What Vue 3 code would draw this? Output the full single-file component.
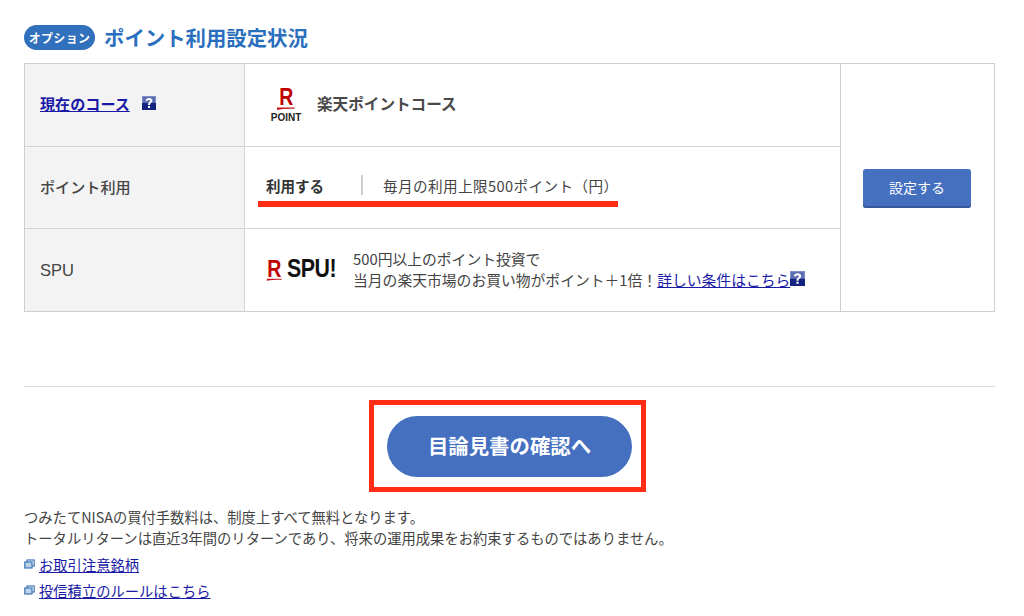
<script setup>
const notes = ['つみたてNISAの買付手数料は、制度上すべて無料となります。', 'トータルリターンは直近3年間のリターンであり、将来の運用成果をお約束するものではありません。']
const links = ['お取引注意銘柄', '投信積立のルールはこちら']
</script>

<template>
  <div class="page">
    <header class="head">
      <span class="badge">オプション</span>
      <h2 class="title">ポイント利用設定状況</h2>
    </header>

    <div class="table">
      <div class="rows">
        <div class="row">
          <div class="th">
            <a class="link strong bold" href="#">現在のコース</a>
            <svg class="q q-head" viewBox="0 0 14 14"><use href="#q" /></svg>
          </div>
          <div class="td course">
            <div class="logo-point">
              <span class="r">R</span>
              <svg class="swoosh" viewBox="0 0 20 3"><path d="M1 0.6 H19 L18 1.8 Q8 1.4 1 3 Z" fill="#c4161c" /></svg>
              <span class="pt">POINT</span>
            </div>
            <b class="course-name">楽天ポイントコース</b>
          </div>
        </div>
        <div class="row">
          <div class="th"><span class="strong">ポイント利用</span></div>
          <div class="td usage">
            <div class="usage-line">
              <b class="use">利用する</b>
              <span class="sep"></span>
              <span class="limit">毎月の利用上限500ポイント（円）</span>
            </div>
          </div>
        </div>
        <div class="row">
          <div class="th"><span class="latin">SPU</span></div>
          <div class="td spu">
            <div class="logo-spu">
              <span class="r-wrap">
                <span class="r small">R</span>
                <svg class="swoosh small" viewBox="0 0 20 3"><path d="M1 0.6 H19 L18 1.8 Q8 1.4 1 3 Z" fill="#c4161c" /></svg>
              </span>
              <span class="spu-word">SPU!</span>
            </div>
            <p class="spu-text">500円以上のポイント投資で<br />当月の楽天市場のお買い物がポイント＋1倍！<a class="link" href="#">詳しい条件はこちら</a><svg class="q q-inline" viewBox="0 0 14 14"><use href="#q" /></svg></p>
          </div>
        </div>
      </div>
      <div class="action">
        <button class="set-btn" type="button"><span class="set-label">設定する</span></button>
      </div>
    </div>

    <hr class="rule" />

    <div class="cta-frame">
      <button class="cta" type="button"><span class="cta-label">目論見書の確認へ</span></button>
    </div>

    <div class="notes">
      <p v-for="n in notes" :key="n">{{ n }}</p>
    </div>
    <ul class="links">
      <li v-for="l in links" :key="l">
        <svg class="win" viewBox="0 0 11 10">
          <rect x="3" y="1" width="7.2" height="6" fill="#fff" stroke="#3f76b5" stroke-width="1.2" />
          <rect x="0.8" y="3" width="7.2" height="6" fill="#bcd2e8" stroke="#3f76b5" stroke-width="1.2" />
        </svg>
        <a class="link" href="#">{{ l }}</a>
      </li>
    </ul>

    <svg class="defs" width="0" height="0">
      <symbol id="q" viewBox="0 0 14 14">
        <rect width="14" height="14" fill="#7f8fc4" />
        <rect y="7" width="14" height="7" fill="#13237f" />
        <rect x="1" y="1" width="12" height="6" fill="#5a6db3" />
        <path d="M3.6 4.8 C3.6 1.2 10.4 1.2 10.4 4.6 C10.4 6.8 8 6.8 8 9 H6 C6 6.2 8.2 6.2 8.2 4.8 C8.2 3.6 5.8 3.6 5.8 4.8 Z" fill="#fff" />
        <rect x="6" y="10" width="2" height="2" fill="#fff" />
      </symbol>
    </svg>
  </div>
</template>

<style>
body { margin: 0; background: #fff; }
</style>

<style scoped>
.page {
  width: 1024px;
  height: 616px;
  box-sizing: border-box;
  padding: 23px 29px 0 24px;
  overflow: hidden;
  font-family: "Noto Sans CJK JP", "Liberation Sans", sans-serif;
  font-size: 14px;
  color: #333;
  background: #fff;
}
.head { display: flex; align-items: center; gap: 9px; height: 28px; }
.badge {
  display: flex; align-items: center; justify-content: center;
  width: 71px; height: 25px; border-radius: 13px;
  background: #3170bd; color: #fff;
  font-size: 12px; font-weight: 700; letter-spacing: .3px;
}
.title { margin: 0; font-size: 20.4px; font-weight: 700; color: #2a6fbd; line-height: 28px; }
.table {
  display: flex; margin-top: 12px; width: 971px; height: 249px;
  box-sizing: border-box; border: 1px solid #cfcfcf;
}
.rows { width: 816px; flex: none; box-sizing: border-box; display: flex; flex-direction: column; border-right: 1px solid #cfcfcf; }
.row { flex: none; height: 82px; box-sizing: border-box; display: flex; border-bottom: 1px solid #d4d4d4; }
.row:first-child { height: 83px; }
.row:last-child { border-bottom: 0; }
.th {
  width: 220px; box-sizing: border-box; background: #f3f3f3;
  border-right: 1px solid #d4d4d4; padding: 0 0 4px 15px;
  display: flex; align-items: center;
}
.row:last-child .th { padding-bottom: 0; }
.td { flex: 1; display: flex; align-items: center; }
.strong { font-weight: 500; font-size: 15.1px; color: #444; }
.latin { font-family: "Liberation Sans", sans-serif; font-size: 16.5px; color: #444; }
.bold { font-weight: 700; }
a.link { color: #1a1aa6; text-decoration: underline; }
.q { display: block; }
.q-head { width: 14px; height: 14px; margin-left: 12px; margin-top: -1px; }
.q-inline { display: inline-block; width: 15px; height: 15px; vertical-align: 0; }
.course { padding-left: 24px; }
.logo-point { width: 34px; display: flex; flex-direction: column; align-items: center; margin-top: 1px; }
.r {
  font-family: "Liberation Sans", sans-serif; font-weight: 700;
  color: #bf0000; font-size: 23px; line-height: 19px; transform: scaleX(.85);
}
.swoosh { display: block; width: 20px; height: 3px; }
.pt { font-family: "Liberation Sans", sans-serif; font-weight: 700; font-size: 10px; line-height: 12px; color: #222; margin-top: 2px; }
.course-name { margin-left: 14px; margin-bottom: 5px; font-size: 15.6px; font-weight: 700; color: #4a4a4a; white-space: nowrap; }
.usage { padding-left: 13px; }
.usage-line {
  position: relative; display: flex; align-items: center;
  width: 360px; height: 38px; padding: 0 0 0 8px; box-sizing: border-box;
}
.usage-line::after {
  content: ""; position: absolute; left: 0; right: 0; bottom: 0;
  height: 6px; background: #ff2d16;
}
.use { flex: none; font-size: 14.5px; font-weight: 700; width: 95px; margin-top: -5px; }
.sep { flex: none; width: 2px; height: 20px; background: #cfcfcf; margin-top: -5px; }
.limit { flex: none; margin-left: 20px; font-size: 14.6px; letter-spacing: .4px; color: #444; margin-top: -5px; white-space: nowrap; }
.spu { padding-left: 21px; }
.logo-spu { display: flex; align-items: center; width: 87px; flex: none; }
.r-wrap { display: flex; flex-direction: column; align-items: center; width: 17px; }
.r.small { font-size: 23px; line-height: 18px; color: #bf0000; }
.swoosh.small { width: 17px; }
.spu-word {
  font-family: "Liberation Sans", sans-serif; font-weight: 700;
  font-size: 26px; line-height: 24px; color: #111; margin-left: 4px; margin-top: -4px; letter-spacing: -.5px;
  transform: scaleX(.82); transform-origin: left center; white-space: nowrap;
}
.spu-text { margin: 0 0 2px; font-size: 14.8px; line-height: 21px; color: #444; white-space: nowrap; }
.action { flex: 1; display: flex; align-items: center; justify-content: center; padding-right: 1px; }
.set-btn {
  width: 108px; height: 39px; border: 0; border-radius: 3px; margin-top: 1px;
  background: #4470bf; box-shadow: inset 0 -2px 0 #36599c;
  color: #fff; font: inherit; font-size: 14px; padding: 0 0 3px;
}
.rule { margin: 74px 0 0; border: 0; border-top: 1px solid #d9d9d9; }
.cta-frame {
  box-sizing: border-box; width: 277px; height: 92px; margin: 13px 0 0 345px; border: 5px solid #ff2d16;
  padding-left: 13px; display: flex; align-items: center;
}
.cta {
  width: 245px; height: 61px; border: 0; border-radius: 31px; padding: 0 0 3px;
  background: #4470bf; color: #fff; font: inherit; font-size: 20.4px; font-weight: 700;
}
.notes { margin-top: 14px; }
.notes p { margin: 0; font-size: 14.3px; line-height: 21px; color: #444; white-space: nowrap; }
.links { list-style: none; margin: 3px 0 0; padding: 0; }
.links li { display: flex; align-items: center; height: 26px; font-size: 14.3px; }
.win { width: 11px; height: 10px; margin-right: 4px; }
.defs { position: absolute; }
</style>
